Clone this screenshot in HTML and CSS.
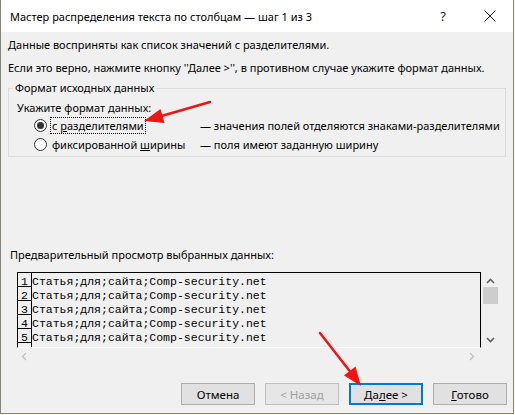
FILE: index.html
```html
<!DOCTYPE html>
<html lang="ru">
<head>
<meta charset="utf-8">
<title>Мастер распределения текста по столбцам</title>
<link rel="stylesheet" href="styles.css">
</head>
<body>
<div class="window">
  <div class="titlebar">
    <span class="title">Мастер распределения текста по столбцам — шаг 1 из 3</span>
    <span class="help">?</span>
    <svg class="close" width="12" height="12" viewBox="0 0 12 12"><path d="M0.5 0.5 L11.5 11.5 M11.5 0.5 L0.5 11.5" stroke="#1a1a1a" stroke-width="1" fill="none"/></svg>
  </div>
  <div class="body">
    <p class="intro first">Данные восприняты как список значений с разделителями.</p>
    <p class="intro second">Если это верно, нажмите кнопку ''Далее &gt;'', в противном случае укажите формат данных.</p>
    <fieldset class="group">
      <legend>Формат исходных данных</legend>
      <div class="prompt">Укажите формат данных:</div>
      <div class="option">
        <span class="radio checked"></span>
        <span class="opt-label"><span class="focus active">с <u>р</u>азделителями</span></span>
        <span class="desc">— значения полей отделяются знаками-разделителями</span>
      </div>
      <div class="option">
        <span class="radio"></span>
        <span class="opt-label"><span class="focus">фиксированной <u>ш</u>ирины</span></span>
        <span class="desc">— поля имеют заданную ширину</span>
      </div>
    </fieldset>
    <div class="spacer"></div>
    <div class="preview-label">Предварительный просмотр выбранных данных:</div>
    <div class="preview">
      <div class="rows">
        <div class="row"><span class="num">1</span><span class="cell">Статья;для;сайта;Comp-security.net</span></div>
        <div class="row"><span class="num">2</span><span class="cell">Статья;для;сайта;Comp-security.net</span></div>
        <div class="row"><span class="num">3</span><span class="cell">Статья;для;сайта;Comp-security.net</span></div>
        <div class="row"><span class="num">4</span><span class="cell">Статья;для;сайта;Comp-security.net</span></div>
        <div class="row"><span class="num">5</span><span class="cell">Статья;для;сайта;Comp-security.net</span></div>
        <div class="row"><span class="num">6</span><span class="cell">Статья;для;сайта;Comp-security.net</span></div>
      </div>
      <div class="vscroll">
        <svg class="chev" width="9" height="6" viewBox="0 0 9 6"><polyline points="1,5 4.5,1.5 8,5" fill="none" stroke="#606060" stroke-width="1.6"/></svg>
        <div class="thumb"></div>
        <div class="vspace"></div>
        <svg class="chev" width="9" height="6" viewBox="0 0 9 6"><polyline points="1,1 4.5,4.5 8,1" fill="none" stroke="#606060" stroke-width="1.6"/></svg>
      </div>
      <div class="hscroll">
        <svg class="chev" width="6" height="9" viewBox="0 0 6 9"><polyline points="5,1 1.5,4.5 5,8" fill="none" stroke="#c4c4c4" stroke-width="1.6"/></svg>
        <svg class="chev" width="6" height="9" viewBox="0 0 6 9"><polyline points="1,1 4.5,4.5 1,8" fill="none" stroke="#c4c4c4" stroke-width="1.6"/></svg>
      </div>
    </div>
    <div class="buttons">
      <button class="btn">Отмена</button>
      <button class="btn disabled">&lt; Назад</button>
      <button class="btn default">Да<u>л</u>ее &gt;</button>
      <button class="btn"><u>Г</u>отово</button>
    </div>
  </div>
  <svg class="arrows" width="514" height="414" viewBox="0 0 514 414">
    <line x1="210" y1="102" x2="158" y2="117" stroke="#f01414" stroke-width="2.5" stroke-linecap="round"/>
    <polygon points="144,121 160.5,109 164.5,123" fill="#f01414"/>
    <line x1="320" y1="333" x2="352" y2="374" stroke="#f01414" stroke-width="2.5" stroke-linecap="round"/>
    <polygon points="361,386 344,375.5 355.5,366.5" fill="#f01414"/>
  </svg>
</div>
</body>
</html>
```
FILE: styles.css
```css
* { box-sizing: border-box; }
html, body { margin: 0; padding: 0; }
body {
  background: #fbfbe4;
  font-family: "Noto Sans", "Open Sans", sans-serif;
  font-size: 11px;
  color: #000;
}
.window {
  position: relative;
  width: 514px;
  height: 414px;
  border: 1px solid #85857a;
  border-top: none;
  background: #f0f0f0;
  display: flex;
  flex-direction: column;
}
.titlebar {
  height: 32px;
  background: #fff;
  display: flex;
  align-items: center;
  padding-left: 9px;
}
.title { flex: 1; font-size: 11px; color: #000; }
.help { font-size: 13px; margin-right: 38px; color: #1a1a1a; }
.close { margin-right: 17px; }
.body {
  flex: 1;
  display: flex;
  flex-direction: column;
  padding: 5px 7px 8px 7px;
}
.intro { margin: 0; line-height: 16px; }
.intro.second { margin-top: 7px; }
.group {
  margin: 4px 0 0 0;
  padding: 0 0 2px 8px;
  border: 1px solid #dcdcdc;
  min-width: 0;
}
.group legend {
  padding: 0 2px;
  margin-left: -4px;
  line-height: 16px;
}
.prompt { line-height: 16px; margin-top: 4px; }
.option {
  display: flex;
  align-items: center;
  height: 19px;
  padding-left: 17px;
}
.radio {
  width: 13px;
  height: 13px;
  border: 1px solid #333;
  border-radius: 50%;
  background: #fff;
  display: flex;
  align-items: center;
  justify-content: center;
  flex: none;
}
.radio.checked::after {
  content: "";
  width: 7px;
  height: 7px;
  border-radius: 50%;
  background: #333;
}
.opt-label { width: 153px; padding-left: 3px; flex: none; }
.focus {
  display: inline-block;
  line-height: 15px;
  padding: 0 1px;
  border: 1px dotted transparent;
}
.focus.active { border-color: #000; }
.desc { white-space: nowrap; }
.spacer { flex: 1; }
.preview-label { line-height: 16px; margin-left: 2px; }
.preview {
  margin-top: 9px;
  margin-left: 9px;
  width: 482px;
  display: grid;
  grid-template-columns: 464px 17px;
  grid-template-rows: 76px 16px;
}
.rows {
  border: 1px solid #000;
  border-bottom-color: #fff;
  overflow: hidden;
  font-family: "Liberation Mono", monospace;
  font-size: 11.5px;
}
.row { display: flex; height: 14px; align-items: flex-start; }
.num {
  width: 14px;
  height: 14px;
  flex: none;
  text-align: center;
  border-right: 1px solid #000;
  border-bottom: 1px solid #000;
  line-height: 18px;
}
.cell { line-height: 18px; white-space: nowrap; }
.vscroll {
  display: flex;
  flex-direction: column;
  align-items: center;
  padding: 6px 0 5px 1px;
}
.thumb { width: 15px; height: 17px; background: #cdcdcd; margin-top: 3px; }
.vspace { flex: 1; }
.hscroll {
  display: flex;
  justify-content: space-between;
  align-items: center;
  padding: 0 6px 0 4px;
}
.buttons {
  margin-top: 19px;
  margin-right: -1px;
  display: flex;
  justify-content: flex-end;
  gap: 10px;
}
.btn {
  width: 74px;
  height: 22px;
  background: #e1e1e1;
  border: 1px solid #adadad;
  font-family: inherit;
  font-size: 11.5px;
  color: #000;
  padding: 0;
}
.btn.disabled { color: #a0a0a0; border-color: #bfbfbf; background: #e6e6e6; }
.btn.default { border: 2px solid #0078d7; }
.arrows { position: absolute; left: -1px; top: 0; pointer-events: none; }
```
